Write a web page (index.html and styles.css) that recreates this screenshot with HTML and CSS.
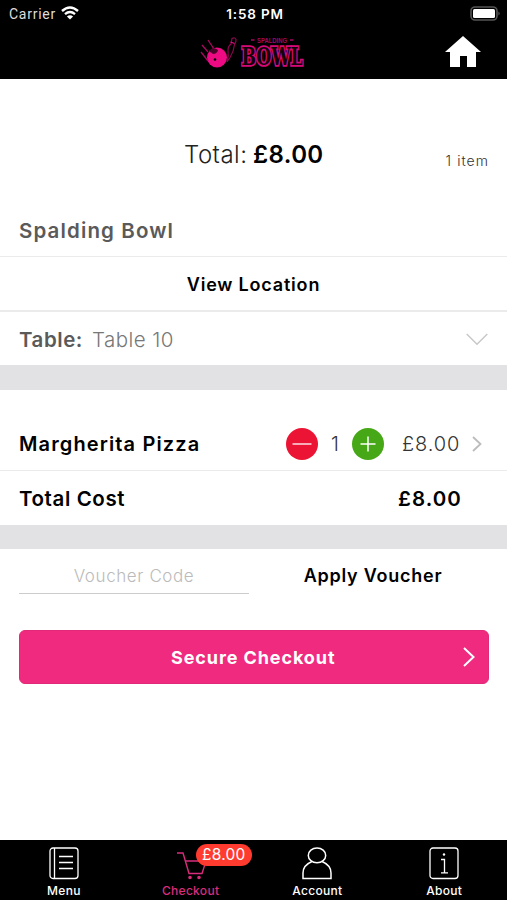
FILE: index.html
```html
<!DOCTYPE html>
<html lang="en">
<head>
<meta charset="utf-8">
<title>Checkout</title>
<link rel="stylesheet" href="styles.css">
</head>
<body>
<div class="app">
  <header class="header">
    <div class="status">
      <div class="carrier"><span>Carrier</span>
        <svg width="18" height="14" viewBox="0 0 18 14" fill="none" stroke="#fff" stroke-width="2.4"><path d="M1 5Q9-2 17 5"/><path d="M4 8.2Q9 4 14 8.2"/><path d="M9 13.5L5.9 10.5Q9 8 12.1 10.5Z" fill="#fff" stroke="none"/></svg>
      </div>
      <div class="clock">1:58 PM</div>
      <svg class="battery" width="31" height="15" viewBox="0 0 31 15"><rect x="1" y="1" width="26" height="13" rx="4" fill="#000" stroke="#555" stroke-width="1.6"/><rect x="3" y="3" width="22" height="9" rx="1.5" fill="#fff"/><path d="M28.5 5.5q2.3 2 0 4z" fill="#666"/></svg>
    </div>
    <div class="brandbar">
      <svg class="logo" width="110" height="36" viewBox="-2 0 110 36">
        <circle cx="16" cy="22.5" r="10" fill="#ed0a83"/>
        <path d="M1 10L7 17M7 5L13 14M0 17L7 26" stroke="#a90860" stroke-width="1.3"/>
        <path d="M8 16q4-5 9-1q-1 4-5 4z" fill="#4a0329"/><circle cx="14" cy="24.500" r="1.300" fill="#000"/>
        <path d="M31 3.500q3-1.500 4 1q.4 2-1.500 5q-.7 7-4.500 13l-3 4.500q2-6 1-12q0-4 3-6z" fill="#000" stroke="#8d0750" stroke-width="1.200"/><path d="M29.500 7l4 1.500" stroke="#ed0a83" stroke-width="1.200"/>
        <text class="logo-small" x="56" y="7.500" textLength="30" lengthAdjust="spacingAndGlyphs">SPALDING</text>
        <path d="M50 5h3.500M89 5h3.500" stroke="#7c0647" stroke-width="2"/>
        <text class="logo-big" x="40.500" y="30" textLength="61" lengthAdjust="spacingAndGlyphs">BOWL</text>
      </svg>
      <svg class="home" width="36" height="32" viewBox="0 0 36 32"><path d="M18 0L36 16H31V31H22V20H15V31H5V16H0Z" fill="#fff"/></svg>
    </div>
  </header>
  <main>
    <section class="summary"><span class="total">Total:</span><strong class="sum">£8.00</strong><span class="count">1 item</span></section>
    <div class="row venue"><span class="venue-name">Spalding Bowl</span></div>
    <div class="row location"><span>View Location</span></div>
    <div class="row table"><span class="table-label">Table:</span><span class="table-value">Table 10</span>
      <svg class="down" width="22" height="13" viewBox="0 0 22 13" fill="none" stroke="#c8c8c8" stroke-width="1.5"><path d="M.7 1L11 11.2L21.3 1"/></svg></div>
    <div class="band"></div>
    <div class="row item"><span class="item-name">Margherita Pizza</span>
      <svg class="minus" width="32" height="32" viewBox="0 0 32 32"><circle cx="16" cy="16" r="16" fill="#ec1434"/><path d="M6.500 16h19" stroke="#fff" stroke-width="1.300"/></svg>
      <span class="qty">1</span>
      <svg class="plus" width="32" height="32" viewBox="0 0 32 32"><circle cx="16" cy="16" r="16" fill="#46a817"/><path d="M8.500 16h15M16 8.500v15" stroke="#fff" stroke-width="1.500"/></svg>
      <span class="price">£8.00</span>
      <svg class="next" width="10" height="16" viewBox="0 0 10 16" fill="none" stroke="#bcbcbc" stroke-width="1.800"><path d="M1 1L8.500 8L1 15"/></svg></div>
    <div class="row cost"><span class="cost-label">Total Cost</span><span class="cost-value">£8.00</span></div>
    <div class="band band-short"></div>
    <div class="voucher"><div class="code"><span>Voucher Code</span></div><div class="apply"><span>Apply Voucher</span></div></div>
    <div class="pay"><span>Secure Checkout</span>
      <svg class="go" width="12" height="20" viewBox="0 0 12 20" fill="none" stroke="#fff" stroke-width="2"><path d="M1 1L10.500 10L1 19"/></svg></div>
  </main>
  <nav class="tabs">
    <div class="tab"><svg width="30" height="33" viewBox="0 0 30 33" fill="none" stroke="#fff" stroke-width="1.300"><rect x="1" y="1" width="28" height="30.500" rx="3"/><path d="M5.500 1v30.500M10 9.500h14M10 15.500h14M10 21.500h14"/></svg><span>Menu</span></div>
    <div class="tab active"><svg width="30" height="33" viewBox="0 0 30 33" fill="none" stroke="#d92c7c" stroke-width="1.400"><path d="M1 6h6l6 20.500h13L30 14H9"/><circle cx="14" cy="30.500" r="1.100" fill="#d92c7c"/><circle cx="23" cy="30.500" r="1.100" fill="#d92c7c"/></svg><span>Checkout</span><b class="badge">£8.00</b></div>
    <div class="tab"><svg width="30" height="33" viewBox="0 0 30 33" fill="none" stroke="#fff" stroke-width="1.500"><ellipse cx="15" cy="8.400" rx="8.700" ry="7.400"/><path d="M10 14.500C4 17 1 21 1 26v5.500h28v-5.500c0-5-3-9-9-11.500"/></svg><span>Account</span></div>
    <div class="tab"><svg width="30" height="33" viewBox="0 0 30 33" fill="none" stroke="#fff" stroke-width="1.300"><rect x="1" y="1" width="28" height="30.500" rx="3"/><path d="M12 12.500h3.500v13M12 25.800h7"/><circle cx="15" cy="7.500" r="1.200" fill="#fff" stroke="none"/></svg><span>About</span></div>
  </nav>
</div>
</body>
</html>
```
FILE: styles.css
```css
* { box-sizing: border-box; }
body { margin: 0; background: #fff; font-family: Inter, "Liberation Sans", sans-serif; color: #000; }
svg { display: block; flex: none; }
.app { width: 507px; height: 900px; display: flex; flex-direction: column; overflow: hidden; }
.header { height: 79px; background: #000; color: #fff; flex: none; }
.status { height: 28px; display: grid; grid-template-columns: 1fr auto 1fr; align-items: center; padding: 0 6px 0 9px; }
.carrier { display: flex; align-items: center; gap: 5px; font: 14px Roboto, sans-serif; color: #ddd; letter-spacing: .75px; }
.carrier svg { margin-top: -2px; }
.clock { font-size: 13.5px; font-weight: 600; letter-spacing: .8px; }
.battery { justify-self: end; margin-top: -2px; }
.brandbar { display: grid; grid-template-columns: 1fr auto 1fr; padding: 7px 26px 0; height: 51px; }
.logo { grid-column: 2; }
.home { justify-self: end; margin-top: 1px; }
.logo-small { font: bold 7px "Liberation Sans", sans-serif; fill: #a50660; }
.logo-big { font: bold 24px "DejaVu Serif", serif; fill: #12000b; stroke: #d60a77; stroke-width: 3.6px; paint-order: stroke; }
main { flex: 1; }
main span, main strong { white-space: nowrap; }
.summary { height: 126px; display: flex; align-items: center; padding: 25px 19px 0 184px; }
.total { font-size: 24px; font-weight: 300; color: #222; letter-spacing: .5px; width: 69px; }
.sum { font-size: 24px; font-weight: 600; letter-spacing: .4px; }
.count { margin-left: auto; padding-top: 12px; font-size: 14px; font-weight: 300; color: #333; letter-spacing: 1.05px; margin-right: -1px; }
.row { display: flex; align-items: center; padding: 0 19px; border-bottom: 1px solid #ebebeb; }
.venue { height: 52px; font-size: 20.5px; font-weight: 600; color: #5a5a5a; letter-spacing: 1.13px; }
.location { height: 55px; justify-content: center; font-size: 18px; font-weight: 600; border-bottom-width: 2px; letter-spacing: .8px; padding-top: 1px; }
.table { height: 53px; font-size: 20.5px; border: 0; padding-top: 1px; }
.table-label { width: 73px; font-weight: 600; color: #5a5a5a; letter-spacing: .55px; }
.table-value { font-weight: 300; color: #777; letter-spacing: .45px; }
.down { margin-left: auto; }
.band { height: 25px; background: #e2e2e4; }
.band-short { height: 24px; }
.item { height: 81px; padding-top: 27px; font-size: 20px; }
.item-name { width: 267px; font-weight: 600; letter-spacing: 1.12px; }
.qty { width: 34px; text-align: center; font-weight: 300; color: #333; }
.price { width: 70px; margin-left: 18px; font-weight: 300; color: #333; letter-spacing: .9px; }
.cost { height: 54px; font-size: 20.5px; font-weight: 600; border: 0; letter-spacing: .6px; }
.cost-value { margin-left: auto; margin-right: 26px; letter-spacing: 1.1px; }
.voucher { display: flex; height: 45px; margin: 0 19px; }
.code { width: 230px; border-bottom: 1px solid #ccc; text-align: center; font-size: 17px; font-weight: 300; color: #bbb; line-height: 54px; letter-spacing: .6px; }
.apply { flex: 1; text-align: center; font-size: 18px; font-weight: 600; line-height: 54px; padding-left: 9px; letter-spacing: .75px; }
.pay { height: 54px; margin: 36px 18px 0 19px; border-radius: 6px; background: #ef2a7f; border: 1px solid #e12979; color: #fff; display: flex; align-items: center; padding-left: 151px; padding-right: 13px; font-size: 18px; font-weight: 700; letter-spacing: .9px; }
.go { margin-left: auto; }
.tabs { height: 60px; background: #000; color: #fff; display: grid; grid-template-columns: repeat(4, 1fr); }
.tab { position: relative; display: flex; flex-direction: column; align-items: center; padding: 7px 0 0 1px; font-size: 12px; font-weight: 500; }
.tab span { margin-top: 3px; line-height: 16px; letter-spacing: .3px; }
.active { color: #d92c7c; }
.badge { position: absolute; left: 69px; top: 4px; width: 56px; height: 22px; border-radius: 11px; background: #ff3b30; color: #fff; font-size: 15.5px; line-height: 22px; font-weight: 400; text-align: center; letter-spacing: .2px; }
```
